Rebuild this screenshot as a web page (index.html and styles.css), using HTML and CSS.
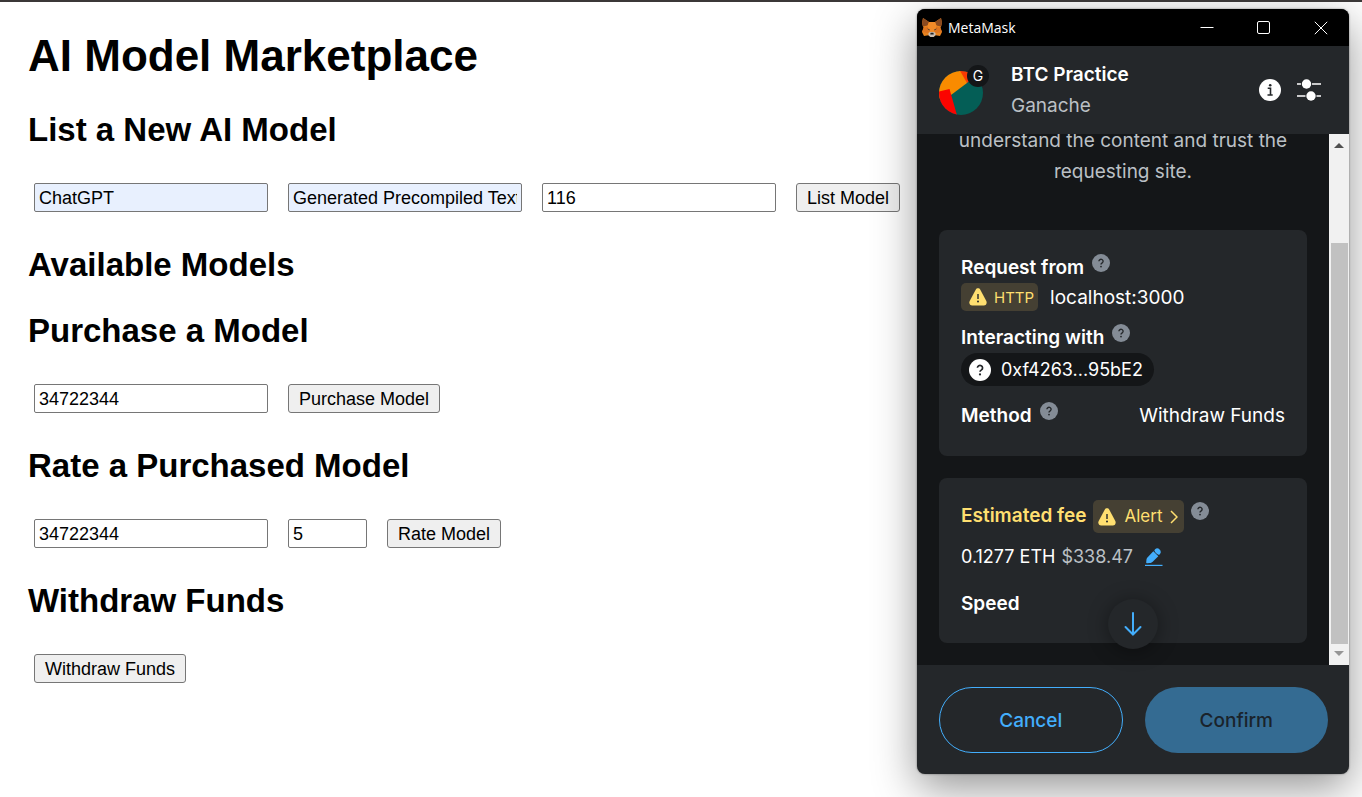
FILE: index.html
```html
<!DOCTYPE html>
<html lang="en">
<head>
<meta charset="utf-8">
<title>AI Model Marketplace</title>
<link rel="stylesheet" href="styles.css">
</head>
<body>
<svg class="defs" aria-hidden="true">
  <symbol id="help" viewBox="0 0 18 18">
    <circle cx="9" cy="9" r="9" fill="currentColor"/>
    <path d="M6.900 7.200a2.100 2 0 1 1 3.300 1.700c-.8.500-1.200.9-1.200 1.600" fill="none" stroke="var(--mark)" stroke-width="1.400"/>
    <circle cx="9" cy="12.600" r=".9" fill="var(--mark)"/>
  </symbol>
  <symbol id="warn" viewBox="0 0 18 18">
    <path d="M9 .3c1 0 1.800.5 2.300 1.400l6 11.200c1 2-.2 4.600-2.500 4.600H3.200C.9 17.500-.3 14.900.700 12.900l6-11.200C7.200.8 8 .3 9 .3Z" fill="#ffdf70"/>
    <path d="M9 6v5" stroke="#24272a" stroke-width="1.400"/>
    <circle cx="9" cy="13.600" r="1" fill="#24272a"/>
  </symbol>
</svg>

<main class="page">
  <h1>AI Model Marketplace</h1>

  <h2>List a New AI Model</h2>
  <form class="row">
    <input class="autofilled" type="text" aria-label="Model name" value="ChatGPT">
    <input class="autofilled" type="text" aria-label="Description" value="Generated Precompiled Text">
    <input type="text" aria-label="Price" value="116">
    <button type="button">List Model</button>
  </form>

  <h2>Available Models</h2>

  <h2>Purchase a Model</h2>
  <form class="row">
    <input type="text" aria-label="Model ID to purchase" value="34722344">
    <button type="button">Purchase Model</button>
  </form>

  <h2>Rate a Purchased Model</h2>
  <form class="row">
    <input type="text" aria-label="Model ID to rate" value="34722344">
    <input class="short" type="text" aria-label="Rating" value="5">
    <button type="button">Rate Model</button>
  </form>

  <h2>Withdraw Funds</h2>
  <form class="row">
    <button type="button">Withdraw Funds</button>
  </form>
</main>

<aside class="wallet" aria-label="MetaMask">
  <div class="titlebar">
    <svg class="fox" viewBox="0 0 20 19" aria-hidden="true">
      <path d="M1 0l6 4h6l6-4 1 5-1.500 5L20 14l-2 4-4.500-.8L11.500 19h-3l-2-1.800L2 18l-2-4 1.500-4L0 5Z" fill="#e8821e"/>
      <path d="M1 0l6 4-1.500 3.500L.8 8.500 0 5Zm18 0-6 4 1.500 3.500 4.700 1L20 5Z" fill="#8a4a20"/>
      <path d="M7 4h6l1.500 4-2 6h-5l-2-6Z" fill="#f08a28"/>
      <path d="M1.500 10l4-1.500 2 5.500-2.500 1-5-1Zm17 0-4-1.500-2 5.500 2.500 1 5-1Z" fill="#dd7420"/>
      <path d="M5 10.500l2.500.7.3 1.500ZM15 10.500l-2.500.7-.3 1.500Z" fill="#333"/>
      <path d="M6.500 15l1.500-1h4l1.500 1v2.200L11.500 19h-3l-2-1.800Z" fill="#c9bdb3"/>
      <path d="M8.500 14.800h3l.2 1.700H8.300Z" fill="#222"/>
    </svg>
    <span class="app-name">MetaMask</span>
    <button class="win-btn" type="button" aria-label="Minimize"><svg viewBox="0 0 14 14"><path d="M.5 6.500h13"/></svg></button>
    <button class="win-btn" type="button" aria-label="Maximize"><svg viewBox="0 0 14 14"><rect x=".5" y=".5" width="12" height="12" rx="1.500"/></svg></button>
    <button class="win-btn" type="button" aria-label="Close"><svg viewBox="0 0 14 14"><path d="M.8.8l12.400 12.400M13.200.8.8 13.200"/></svg></button>
  </div>

  <header class="account">
    <div class="avatar">
      <svg viewBox="0 0 44 44" aria-hidden="true">
        <clipPath id="disc"><circle cx="22" cy="22" r="22"/></clipPath>
        <g clip-path="url(#disc)">
          <path d="M0 0h44v44H0Z" fill="#045e56"/>
          <path d="M20-2h24L28 12l-8-4Z" fill="#fc3a02"/>
          <path d="M-2-2h22L28 12 12 24-2 30Z" fill="#f98b00"/>
          <path d="M-2 21 10.500 18l8 28H-2Z" fill="#fb0400"/>
        </g>
      </svg>
      <span class="network">G</span>
    </div>
    <div class="names">
      <div class="account-name">BTC Practice</div>
      <div class="network-name">Ganache</div>
    </div>
    <button class="icon-btn" type="button" aria-label="Details">
      <svg width="22" height="22" viewBox="0 0 22 22"><circle cx="11" cy="11" r="11" fill="#fff"/><circle cx="11.200" cy="6.200" r="1.300" fill="#24272a"/><path d="M8.700 9.300h2.800v6.400M8.500 16h5.200" fill="none" stroke="#24272a" stroke-width="1.600"/></svg>
    </button>
    <button class="icon-btn" type="button" aria-label="Settings">
      <svg width="24" height="22" viewBox="0 0 24 22"><path d="M0 5h24M0 17h24" stroke="#fff" stroke-width="1.600"/><circle cx="9.500" cy="5" r="5.600" fill="#24272a"/><circle cx="14" cy="17" r="5.600" fill="#24272a"/><circle cx="9.500" cy="5" r="4.700" fill="#fff"/><circle cx="14" cy="17" r="4.700" fill="#fff"/></svg>
    </button>
  </header>

  <div class="body">
    <div class="content">
      <p class="notice">understand the content and trust the requesting site.</p>

      <section class="card">
        <div class="line"><strong>Request from</strong><svg class="help"><use href="#help"/></svg></div>
        <div class="origin">
          <span class="tag http"><svg><use href="#warn"/></svg>HTTP</span>
          <span>localhost:3000</span>
        </div>
        <div class="line spaced"><strong>Interacting with</strong><svg class="help"><use href="#help"/></svg></div>
        <button class="address" type="button"><svg><use href="#help"/></svg>0xf4263...95bE2</button>
        <div class="method">
          <div class="line"><strong>Method</strong><svg class="help"><use href="#help"/></svg></div>
          <span>Withdraw Funds</span>
        </div>
      </section>

      <section class="card">
        <div class="line fee">
          <strong>Estimated fee</strong>
          <button class="tag alert" type="button"><svg><use href="#warn"/></svg>Alert<svg class="chevron" viewBox="0 0 8 14"><path d="M1 1l6 6-6 6" fill="none" stroke="currentColor" stroke-width="1.500"/></svg></button>
          <svg class="help"><use href="#help"/></svg>
        </div>
        <div class="amount">
          <span>0.1277 ETH</span>
          <span class="muted">$338.47</span>
          <button class="icon-btn edit" type="button" aria-label="Edit fee">
            <svg width="18" height="18" viewBox="0 0 18 18" fill="#43aefc"><path d="M8.300 3.200l5 5-5.600 5.600c-.9.900-2 1.200-3.200 1.300l-2.200.2c-.7.100-1.200-.4-1.100-1.100l.2-2c.1-1.300.5-2.200 1.300-3Z"/><path d="M9.300 2.200 10.400 1c2.500-2.400 7.100 1.900 4.700 4.800l-1 1.100c-2.200-.6-4-2.200-4.800-4.700Z"/><path d="M0 16.800h17.500V18H0Z"/></svg>
          </button>
        </div>
        <div class="line speed"><strong>Speed</strong></div>
      </section>
    </div>
    <div class="scrollbar" aria-hidden="true">
      <svg viewBox="0 0 10 5"><path d="M0 5 5 0l5 5Z" fill="#505050"/></svg>
      <div class="thumb"></div>
      <svg viewBox="0 0 10 5"><path d="M0 0h10L5 5Z" fill="#969696"/></svg>
    </div>
    <button class="scroll-down" type="button" aria-label="Scroll down">
      <svg width="18" height="24" viewBox="0 0 18 24"><path d="M9 1v21.500M1.500 15 9 22.500 16.500 15" fill="none" stroke="#43aefc" stroke-width="2" stroke-linecap="round"/></svg>
    </button>
  </div>

  <footer class="actions">
    <button class="cancel" type="button">Cancel</button>
    <button class="confirm" type="button">Confirm</button>
  </footer>
</aside>
</body>
</html>
```

FILE: styles.css
```css
* { box-sizing: border-box; }

body {
  margin: 0;
  min-height: 100vh;
  position: relative;
  overflow: hidden;
  border-top: 2px solid #3b3838;
  background: #fff;
  font-family: "Liberation Sans", Arial, sans-serif;
  font-size: 18px;
  color: #000;
}

.defs { position: absolute; width: 0; height: 0; }

/* Marketplace page */
.page { padding: 29px 28px; }

.page h1 {
  margin: 0 0 30px;
  font-size: 44px;
  line-height: 50px;
}

.page h2 {
  margin: 0 0 28px;
  font-size: 33px;
  line-height: 38px;
}

.row {
  display: flex;
  gap: 20px;
  padding: 6px;
  margin-bottom: 28px;
}

.row input, .row button {
  height: 29px;
  border: 1px solid #767676;
  border-radius: 2px;
  font: inherit;
  color: #000;
}

.row input {
  width: 234px;
  padding: 2px 4px 0;
  background: #fff;
}

.row .short { width: 79px; }
.row .autofilled { background: #e8f0fe; }

.row button {
  padding: 2px 10px 0;
  border-radius: 3px;
  background: #efefef;
}

/* Wallet window */
.wallet {
  --mark: #24272a;
  position: absolute;
  top: 7px;
  right: 13px;
  bottom: 23px;
  width: 432px;
  display: flex;
  flex-direction: column;
  overflow: hidden;
  border-radius: 8px;
  background: #24272a;
  box-shadow: 0 0 2px rgba(0, 0, 0, .5), 0 14px 44px rgba(0, 0, 0, .42);
  color: #fff;
  font-family: Inter, sans-serif;
  font-size: 19px;
  line-height: 31px;
}

.wallet button {
  font: inherit;
  color: inherit;
  cursor: pointer;
}

.titlebar {
  display: flex;
  align-items: center;
  height: 37px;
  flex: none;
  background: #000;
  font-family: "Open Sans", "Noto Sans", sans-serif;
  font-size: 14px;
}

.fox { width: 20px; height: 19px; margin: 0 6px 0 5px; }
.app-name { flex: 1; }

.win-btn {
  display: flex;
  align-items: center;
  justify-content: center;
  width: 57px;
  height: 37px;
  padding: 0;
  border: 0;
  background: none;
}

.win-btn svg { width: 14px; height: 14px; fill: none; stroke: #fff; }

.account {
  display: flex;
  align-items: center;
  gap: 16px;
  height: 88px;
  flex: none;
  padding: 0 28px 0 22px;
}

.avatar { position: relative; width: 44px; height: 44px; margin-top: 5px; }
.avatar svg { display: block; width: 44px; height: 44px; }

.network {
  position: absolute;
  top: -6px;
  right: -6px;
  width: 22px;
  height: 22px;
  border-radius: 50%;
  background: #141618;
  font-size: 14px;
  line-height: 22px;
  text-align: center;
}

.names { flex: 1; padding-left: 12px; }
.account-name { font-weight: 600; }
.network-name, .muted { color: #bbc0c5; }

.icon-btn { display: flex; padding: 0; border: 0; background: none; }

.body {
  position: relative;
  display: flex;
  flex: 1;
  min-height: 0;
  background: #141618;
}

.content {
  flex: 1;
  display: flex;
  flex-direction: column;
  justify-content: flex-end;
  gap: 22px;
  overflow: hidden;
  padding: 0 22px 22px;
}

.notice {
  margin: 0 0 21px;
  padding: 0 12px;
  color: #bbc0c5;
  text-align: center;
}

.card {
  flex: none;
  padding: 22px;
  border-radius: 8px;
  background: #24272a;
}

.line { display: flex; gap: 8px; }
.line strong { font-weight: 600; }
.spaced { margin-top: 11px; }

.help {
  width: 18px;
  height: 18px;
  margin-top: 2px;
  color: #848c96;
}

.origin { display: flex; align-items: center; gap: 12px; height: 28px; }

.tag {
  display: flex;
  align-items: center;
  gap: 8px;
  border: 0;
  border-radius: 5px;
  background: #454033;
}

.wallet .tag { color: #ffdf70; font-size: 16px; }
.tag svg { width: 18px; height: 18px; }
.wallet .http { height: 28px; padding: 0 4px 0 8px; gap: 7px; font-size: 15px; }
.wallet .alert { height: 33px; padding: 0 6px 0 5px; font-size: 17px; }
.tag .chevron { width: 8px; height: 14px; }

.wallet .address {
  display: flex;
  align-items: center;
  gap: 10px;
  height: 33px;
  padding: 0 11px 0 8px;
  border: 0;
  border-radius: 17px;
  background: #141618;
  font-size: 18px;
}

.address svg { width: 22px; height: 22px; }

.method {
  display: flex;
  align-items: center;
  justify-content: space-between;
  height: 37px;
  margin-top: 11px;
}

.fee { gap: 7px; height: 33px; }
.fee strong { color: #ffdf70; }

.amount {
  display: flex;
  align-items: center;
  gap: 6px;
  margin-top: 8px;
  font-size: 18px;
}

.edit { margin-left: 6px; }
.speed { padding: 16px 0 2px; }

.scrollbar {
  display: flex;
  flex-direction: column;
  align-items: center;
  width: 20px;
  padding: 9px 0;
  background: #f1f1f1;
}

.scrollbar svg { width: 10px; height: 5px; flex: none; }
.thumb { width: 17px; flex: 1; margin: 95px 0 7px; background: #c1c1c1; }

.scroll-down {
  position: absolute;
  bottom: 16px;
  left: calc(50% - 25px);
  display: flex;
  align-items: center;
  justify-content: center;
  width: 50px;
  height: 50px;
  border: 0;
  border-radius: 50%;
  background: #24272a;
  box-shadow: 0 2px 20px rgba(0, 0, 0, .4);
}

.actions {
  display: grid;
  grid-template-columns: 1fr 1fr;
  gap: 22px;
  flex: none;
  padding: 22px 21px 21px 22px;
  box-shadow: 0 0 16px rgba(0, 0, 0, .3);
}

.wallet .actions button { height: 66px; border-radius: 33px; font-weight: 500; }
.wallet .cancel { border: 1px solid #43aefc; background: none; color: #43aefc; }
.wallet .confirm { border: 0; background: #346b92; color: #1a232b; }
```
